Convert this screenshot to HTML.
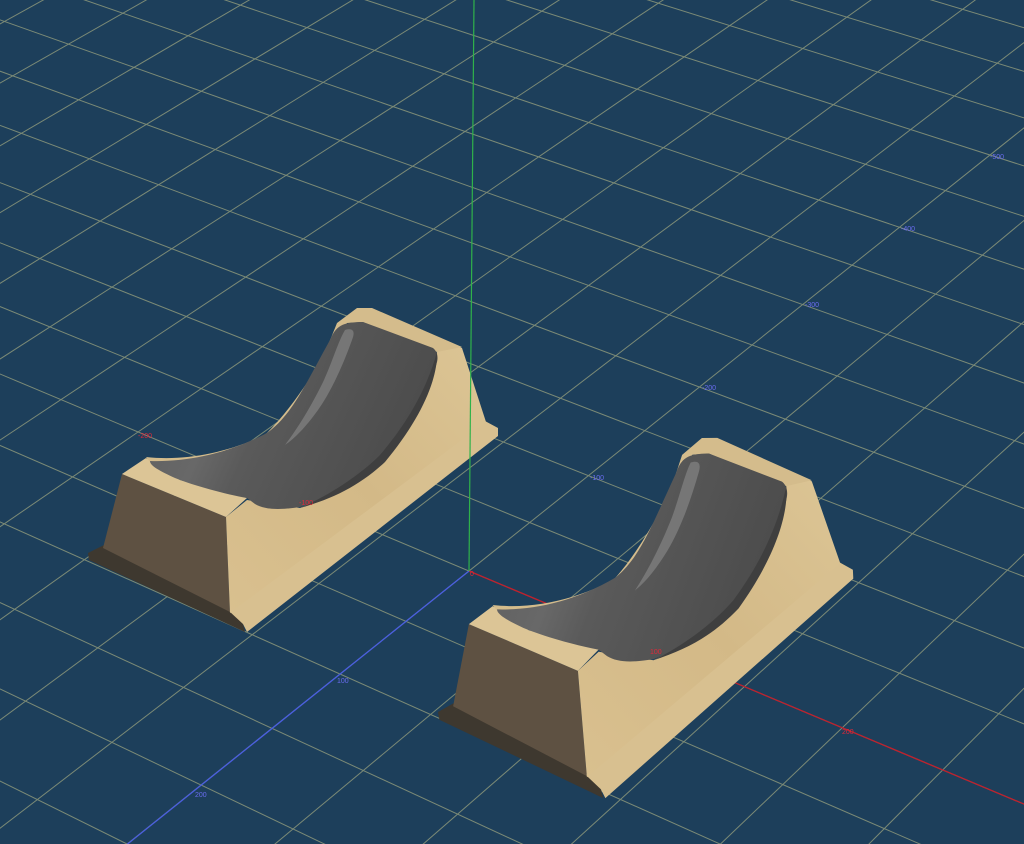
<!DOCTYPE html>
<html><head><meta charset="utf-8"><style>
html,body{margin:0;padding:0;background:#1d3f5b;overflow:hidden;width:1024px;height:844px}
svg{display:block;position:absolute;left:0;top:0}
text{font-family:"Liberation Sans",sans-serif;font-size:7px}
</style></head><body>
<svg width="1024" height="844" viewBox="0 0 1024 844" xmlns="http://www.w3.org/2000/svg">
<rect width="1024" height="844" fill="#1d3f5b"/>
<g stroke="#7b8a76" stroke-width="1" fill="none">
<line x1="-460.5" y1="2179" x2="3749" y2="-2048"/>
<line x1="-611.5" y1="2116" x2="3749" y2="-2048"/>
<line x1="-757.9" y1="2054" x2="3749" y2="-2048"/>
<line x1="-899.8" y1="1994.5" x2="3749" y2="-2048"/>
<line x1="-1037.5" y1="1936.6" x2="3749" y2="-2048"/>
<line x1="-1171" y1="1880.5" x2="3749" y2="-2048"/>
<line x1="-1300.6" y1="1826" x2="3749" y2="-2048"/>
<line x1="-1426.5" y1="1773.3" x2="3749" y2="-2048"/>
<line x1="-1548.7" y1="1721.8" x2="3749" y2="-2048"/>
<line x1="-1667.5" y1="1672" x2="3749" y2="-2048"/>
<line x1="-1783" y1="1623.4" x2="3749" y2="-2048"/>
<line x1="-1895.5" y1="1576" x2="3749" y2="-2048"/>
<line x1="-2004.7" y1="1530" x2="3749" y2="-2048"/>
<line x1="-2111" y1="1485.6" x2="3749" y2="-2048"/>
<line x1="-2215" y1="1442" x2="3749" y2="-2048"/>
<line x1="-2316" y1="1399.6" x2="3749" y2="-2048"/>
<line x1="-2414" y1="1358" x2="3749" y2="-2048"/>
<line x1="-2510" y1="1318" x2="3749" y2="-2048"/>
<line x1="2898.5" y1="2216.5" x2="-5416" y2="-1901"/>
<line x1="3009.5" y1="2128" x2="-5416" y2="-1901"/>
<line x1="3116" y1="2043" x2="-5416" y2="-1901"/>
<line x1="3218" y1="1961.5" x2="-5416" y2="-1901"/>
<line x1="3316.9" y1="1882.5" x2="-5416" y2="-1901"/>
<line x1="3411.5" y1="1807" x2="-5416" y2="-1901"/>
<line x1="3502.7" y1="1734.3" x2="-5416" y2="-1901"/>
<line x1="3590.6" y1="1664" x2="-5416" y2="-1901"/>
<line x1="3675.2" y1="1596.5" x2="-5416" y2="-1901"/>
<line x1="3757" y1="1531" x2="-5416" y2="-1901"/>
<line x1="3836" y1="1468" x2="-5416" y2="-1901"/>
<line x1="3912" y1="1407.3" x2="-5416" y2="-1901"/>
<line x1="3986" y1="1348.3" x2="-5416" y2="-1901"/>
<line x1="4057" y1="1291.3" x2="-5416" y2="-1901"/>
<line x1="4126" y1="1236.3" x2="-5416" y2="-1901"/>
<line x1="4193" y1="1183" x2="-5416" y2="-1901"/>
<line x1="4257.5" y1="1131.5" x2="-5416" y2="-1901"/>
<line x1="4320.5" y1="1081" x2="-5416" y2="-1901"/>
<line x1="4380.5" y1="1033" x2="-5416" y2="-1901"/>
<line x1="4440.5" y1="985" x2="-5416" y2="-1901"/>
</g>
<line x1="469" y1="571" x2="1100" y2="836" stroke="#c0202c" stroke-width="1.3"/>
<line x1="469" y1="571" x2="100" y2="866" stroke="#4a5ee0" stroke-width="1.3"/>
<defs>
<linearGradient id="side" x1="0" y1="1" x2="1" y2="0">
<stop offset="0" stop-color="#d9c08f"/><stop offset="0.5" stop-color="#d3b987"/><stop offset="1" stop-color="#dcc595"/></linearGradient>
<linearGradient id="grey" x1="0" y1="0" x2="1" y2="0.3">
<stop offset="0" stop-color="#5c5c5c"/><stop offset="0.35" stop-color="#686868"/><stop offset="0.5" stop-color="#5a5a5a"/><stop offset="1" stop-color="#4c4c4c"/></linearGradient>
<g id="obj">
<polygon points="88,553 104,545 232,612 243,624 245,632 89,560" fill="#3e382f"/>
<polygon points="229,611 485,421 498,428 498,436 247,632 243,624" fill="#d8c090"/>
<polygon points="122,474 226,517 230,612 103,548" fill="#5e5142"/>
<polygon points="226,517 247,500 300,508 360,480 410,420 437,352 445,340 462,348 486,422 230,613" fill="url(#side)"/>
<polygon points="122,474 146,458 150,460 180,480 247,498 226,517" fill="#dcc596"/>
<path d="M146,457 C190,462 240,450 280,427 C300,410 313,383 337,323 L357,308 L372,308 L462,347 L437,352 L363,322 L347,323 C320,360 300,400 267,433 C240,452 200,462 150,462 Z" fill="#d4bc8c"/>
<path d="M150,461 C185,462 225,455 267,433 C292,415 305,385 330,340 C336,326 342,322 363,322 L433,348 C438,352 438,358 437,362 C430,390 415,420 380,460 C360,480 335,495 300,507 C280,510 265,510 255,504 L247,498 C225,494 195,486 175,478 C160,471 150,466 150,461 Z" fill="url(#grey)"/>
<path d="M345,330 C352,328 356,330 352,340 C343,365 332,390 318,410 C305,428 295,438 285,445 C298,428 312,405 324,380 C333,360 338,342 345,330 Z" fill="#8c8c8c" opacity="0.6"/>
<path d="M437,352 C438,380 420,420 385,462 C360,485 335,498 300,508 C330,495 360,475 380,455 C410,420 428,385 437,352 Z" fill="#3f3f3f"/>
</g>
</defs>
<use href="#obj"/>
<use href="#obj" transform="matrix(1.0275,-0.0089,0.0509,1.1084,319.4,99.8)"/>
<line x1="469" y1="571" x2="474" y2="0" stroke="#2fb24a" stroke-width="1.2"/>
<text x="470" y="576" fill="#e0283a">0</text>
<text x="590" y="480" fill="#6a6cf0">-100</text>
<text x="702" y="390" fill="#6a6cf0">-200</text>
<text x="805" y="307" fill="#6a6cf0">-300</text>
<text x="901" y="231" fill="#6a6cf0">-400</text>
<text x="990" y="159" fill="#6a6cf0">-500</text>
<text x="337" y="683" fill="#6a6cf0">100</text>
<text x="195" y="797" fill="#6a6cf0">200</text>
<text x="138" y="438" fill="#e0283a">-200</text>
<text x="299" y="505" fill="#e0283a">-100</text>
<text x="650" y="654" fill="#e0283a">100</text>
<text x="842" y="734" fill="#e0283a">200</text>
</svg>
</body></html>
